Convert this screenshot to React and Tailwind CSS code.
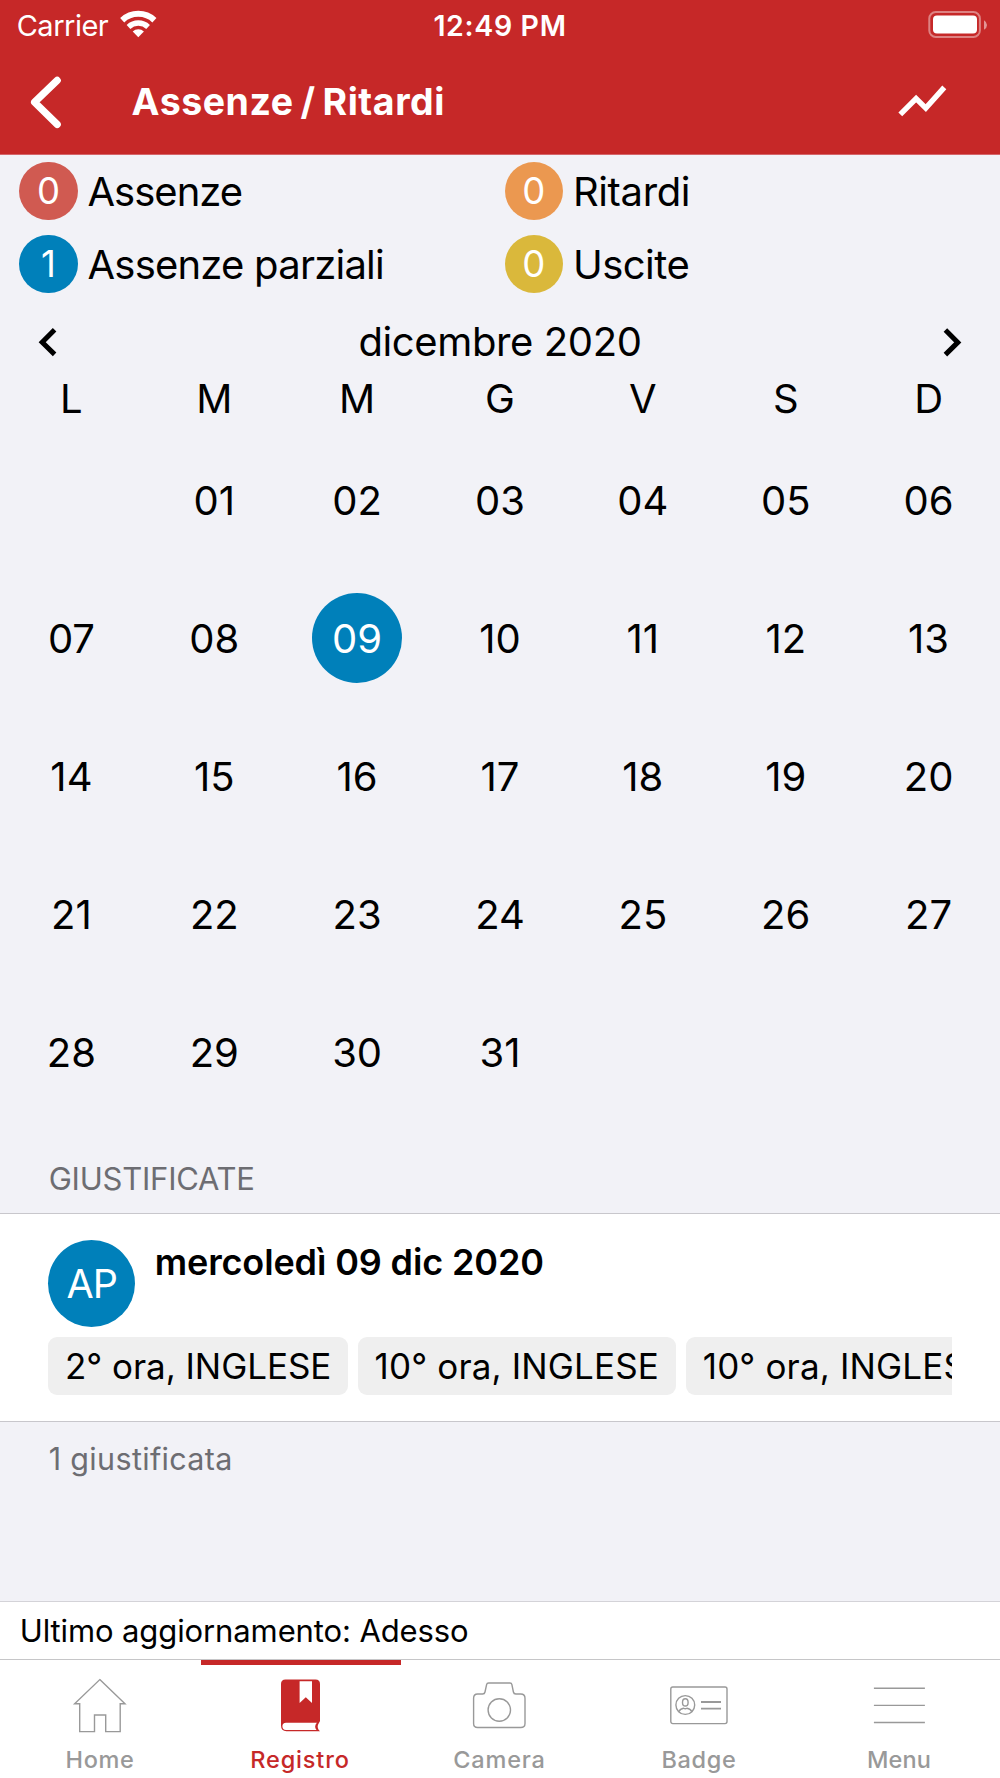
import React from "react";

const legend = [
  { count: "0", label: "Assenze", color: "bg-[#d05a51]", spacing: "tracking-[-1px]" },
  { count: "0", label: "Ritardi", color: "bg-[#eb9850]", spacing: "tracking-[-0.35px]" },
  { count: "1", label: "Assenze parziali", color: "bg-[#0080ba]", spacing: "tracking-[-0.78px]" },
  { count: "0", label: "Uscite", color: "bg-[#dab83b]", spacing: "tracking-[-0.5px]" },
];

const weekdays = ["L", "M", "M", "G", "V", "S", "D"];
const days = [null, ...Array.from({ length: 31 }, (_, i) => String(i + 1).padStart(2, "0"))];

function StatusBar() {
  return (
    <div className="grid h-[50px] grid-cols-3 items-center text-white">
      <div className="flex items-center">
        <span className="ml-[16.7px] w-[103.3px] whitespace-nowrap text-[29px] tracking-[-0.5px]">Carrier</span>
        <svg className="mt-[-3px] h-7 w-[37px] shrink-0" viewBox="0 0 37 28" fill="none" stroke="white">
          <path d="M2.2 10.2A23.6 23.6 0 0 1 34.4 10.2" strokeWidth="6" />
          <path d="M8.5 16.9A14.4 14.4 0 0 1 28.1 16.9" strokeWidth="5.4" />
          <path d="M18.3 27.3L12.7 21.6A8 8 0 0 1 23.9 21.6Z" fill="white" stroke="none" />
        </svg>
      </div>
      <span className="pt-[2px] text-center text-[28.5px] font-semibold tracking-[0.65px]">12:49 PM</span>
      <svg className="mr-[12px] h-7 w-[60px] justify-self-end" viewBox="0 0 60 28">
        <rect x="1.3" y="1.1" width="50.6" height="24.8" rx="6.5" fill="none" stroke="white" strokeOpacity="0.42" strokeWidth="2" />
        <rect x="5" y="4.6" width="44" height="18" rx="4" fill="white" />
        <path d="M56 9.2Q59 11 59 14Q59 17 56 18.8Z" fill="white" fillOpacity="0.5" />
      </svg>
    </div>
  );
}

function TitleBar() {
  return (
    <div className="flex h-[103px] items-center text-white">
      <svg className="ml-[28px] h-[54px] w-[36px]" viewBox="0 0 36 54" fill="none" stroke="white" strokeWidth="7.2" strokeLinecap="round" strokeLinejoin="round">
        <path d="M29.2 5.4L6.6 27.2L29.2 49.4" />
      </svg>
      <h1 className="ml-[67.5px] text-[37.5px] font-bold tracking-[0.55px] [word-spacing:-2.6px]">Assenze / Ritardi</h1>
      <svg className="ml-auto mr-[49px] h-[40px] w-[56px]" viewBox="0 0 56 40" fill="none" stroke="white" strokeWidth="5.4">
        <path d="M5.3 32.4L21.1 16.5L30.8 26.1L49.3 5.4" />
      </svg>
    </div>
  );
}

function Legend() {
  return (
    <div className="grid grid-cols-[485.4px_1fr]">
      {legend.map((l) => (
        <div key={l.label} className="flex h-[72.5px] items-center pl-[19.3px]">
          <span className={`flex size-[58.4px] items-center justify-center rounded-full pt-px text-[36.5px] text-white ${l.color}`}>{l.count}</span>
          <span className={`ml-[9.8px] pt-[2px] text-[40px] ${l.spacing}`}>{l.label}</span>
        </div>
      ))}
    </div>
  );
}

function Calendar() {
  return (
    <div>
      <div className="flex h-[83px] items-center justify-between px-[38px]">
        <svg className="h-[30px] w-5" viewBox="0 0 20 30" fill="none" stroke="black" strokeWidth="5">
          <path d="M16.6 2.8L4.2 15.2L16.6 27.4" />
        </svg>
        <span className="text-[40px] tracking-[-0.38px]">dicembre 2020</span>
        <svg className="mt-[1px] h-[30px] w-5" viewBox="0 0 20 30" fill="none" stroke="black" strokeWidth="5">
          <path d="M3.4 3L15.8 15.4L3.4 27.6" />
        </svg>
      </div>
      <div className="mb-[19px] grid h-[29px] grid-cols-7 items-center justify-items-center pt-px text-[40px] leading-[29px]">
        {weekdays.map((d, i) => (
          <span key={i}>{d}</span>
        ))}
      </div>
      <div className="grid grid-cols-7 justify-items-center text-[40px]">
        {days.map((d, i) => (
          <div key={i} className="flex h-[138px] items-center">
            <span className={d === "09" ? "flex size-[90px] items-center justify-center rounded-full bg-[#0080ba] pt-[2px] text-white" : "pt-[2px]"}>
              {d}
            </span>
          </div>
        ))}
      </div>
    </div>
  );
}

function Justified() {
  const chip = "flex h-[58px] shrink-0 items-center whitespace-nowrap rounded-[9px] bg-[#efefef] pl-[16.7px] text-[35px]";
  return (
    <section>
      <h2 className="flex h-[92px] items-center pl-[48.7px] pt-[23px] text-[31px] tracking-[-0.23px] text-[#6d6d72]">GIUSTIFICATE</h2>
      <div className="h-[209px] border-y border-[#c8c7cc] bg-white px-[48.3px] pt-[26px]">
        <div className="flex">
          <span className="flex size-[87px] items-center justify-center rounded-full bg-[#0080ba] pt-[3px] text-[39.5px] tracking-[-0.9px] text-white">AP</span>
          <span className="ml-[19.4px] flex h-11 items-center text-[36px] font-semibold tracking-[-0.13px]">mercoledì 09 dic 2020</span>
        </div>
        <div className="mt-[10px] flex gap-[10.2px] overflow-hidden">
          <span className={`${chip} w-[299.4px] tracking-[-0.05px]`}>2° ora, INGLESE</span>
          <span className={`${chip} w-[318px] tracking-[0.15px]`}>10° ora, INGLESE</span>
          <span className={`${chip} w-[318px] tracking-[0.15px]`}>10° ora, INGLESE</span>
        </div>
      </div>
      <p className="flex h-[74px] items-center pl-[48.7px] pt-px text-[30.5px] tracking-[0.33px] text-[#6d6d72]">1 giustificata</p>
    </section>
  );
}

function HomeIcon() {
  return <path d="M29.8 4.6L55 28.8H50.2V56.6H35.7V40H24.5V56.6H9.7V28.8H4.6Z" />;
}

function BookIcon() {
  return (
    <g stroke="none">
      <path fill="#c62828" d="M15.5 4.4H45.5Q50 4.4 50 8.9V45.5Q50 47 48.9 47.9Q46.6 51.2 48.6 54.7L50 56.2H16.5Q11 56.2 11 50.5V8.9Q11 4.4 15.5 4.4Z" />
      <path fill="white" d="M29.6 6.3H42V27.9L35.8 22.2L29.6 27.9Z" />
      <path fill="white" d="M16 47.7H46.9Q43.6 51.4 46.5 55H16Q12.4 55 12.4 51.3Q12.4 47.7 16 47.7Z" />
    </g>
  );
}

function CameraIcon() {
  return (
    <g>
      <path d="M7.6 19H12.6Q14.6 19 15 17L16.6 9.6Q16.9 8 18.6 8H40Q41.6 8 41.9 9.6L43.4 17Q43.8 19 45.8 19H50.8Q55 19 55 23.2V48.5Q55 52.5 50.8 52.5H7.6Q3.6 52.5 3.6 48.5V23.2Q3.6 19 7.6 19Z" />
      <circle cx="29.3" cy="35" r="11.2" />
    </g>
  );
}

function BadgeIcon() {
  return (
    <g>
      <rect x="0.8" y="12" width="56.2" height="36.6" rx="2" />
      <circle cx="15.3" cy="30" r="9.4" />
      <ellipse cx="15.3" cy="27.4" rx="2.8" ry="3.6" />
      <path d="M8.8 36.6Q10.2 33.6 13.6 33.2Q15.3 34.4 17 33.2Q20.4 33.6 21.8 36.6" />
      <path d="M31 27H51M31 33.6H51" strokeWidth="1.8" />
    </g>
  );
}

function MenuIcon() {
  return <path d="M3.9 13.3H54.9M3.9 30.4H54.9M3.9 47.5H54.9" />;
}

const tabs = [
  { label: "Home", Icon: HomeIcon, text: "tracking-[0.64px]" },
  { label: "Registro", Icon: BookIcon, text: "tracking-[0.85px]", active: true },
  { label: "Camera", Icon: CameraIcon, text: "tracking-[0.79px] pr-[1px]" },
  { label: "Badge", Icon: BadgeIcon, text: "tracking-[0.66px] pr-[2px]" },
  { label: "Menu", Icon: MenuIcon, text: "tracking-[0.1px] pr-[2px]" },
];

function TabBar() {
  return (
    <nav className="grid h-[119px] grid-cols-5 border-t border-[#c6c6c8] bg-white">
      {tabs.map(({ label, Icon, text, active }) => (
        <div key={label} className={`relative flex flex-col items-center pt-[15px] font-medium ${active ? "text-[#c62828]" : "text-[#999999]"}`}>
          {active && <div className="absolute inset-x-0 top-[-0.5px] ml-[0.5px] mr-[-0.7px] h-[5px] bg-[#c62828]" />}
          <svg className="size-[60px]" viewBox="0 0 60 60" fill="none" stroke="#999999" strokeWidth="1.4">
            <Icon />
          </svg>
          <span className={`mt-[10.4px] h-[30px] text-[23.5px] leading-[30px] ${text}`}>{label}</span>
        </div>
      ))}
    </nav>
  );
}

export default function App() {
  return (
    <div className="flex h-[1778px] w-[1000px] flex-col overflow-hidden bg-[#f2f2f7] font-['Inter',sans-serif] leading-none text-black">
      <header className="h-[155px] border-b border-[#d5656a] bg-[#c62828]">
        <StatusBar />
        <TitleBar />
      </header>
      <main className="flex-1">
        <Legend />
        <Calendar />
        <Justified />
      </main>
      <div className="flex h-[58px] items-center border-t border-[#d4d3d8] bg-white pl-[19.7px] text-[31px] tracking-[-0.11px]">
        Ultimo aggiornamento: Adesso
      </div>
      <TabBar />
    </div>
  );
}
